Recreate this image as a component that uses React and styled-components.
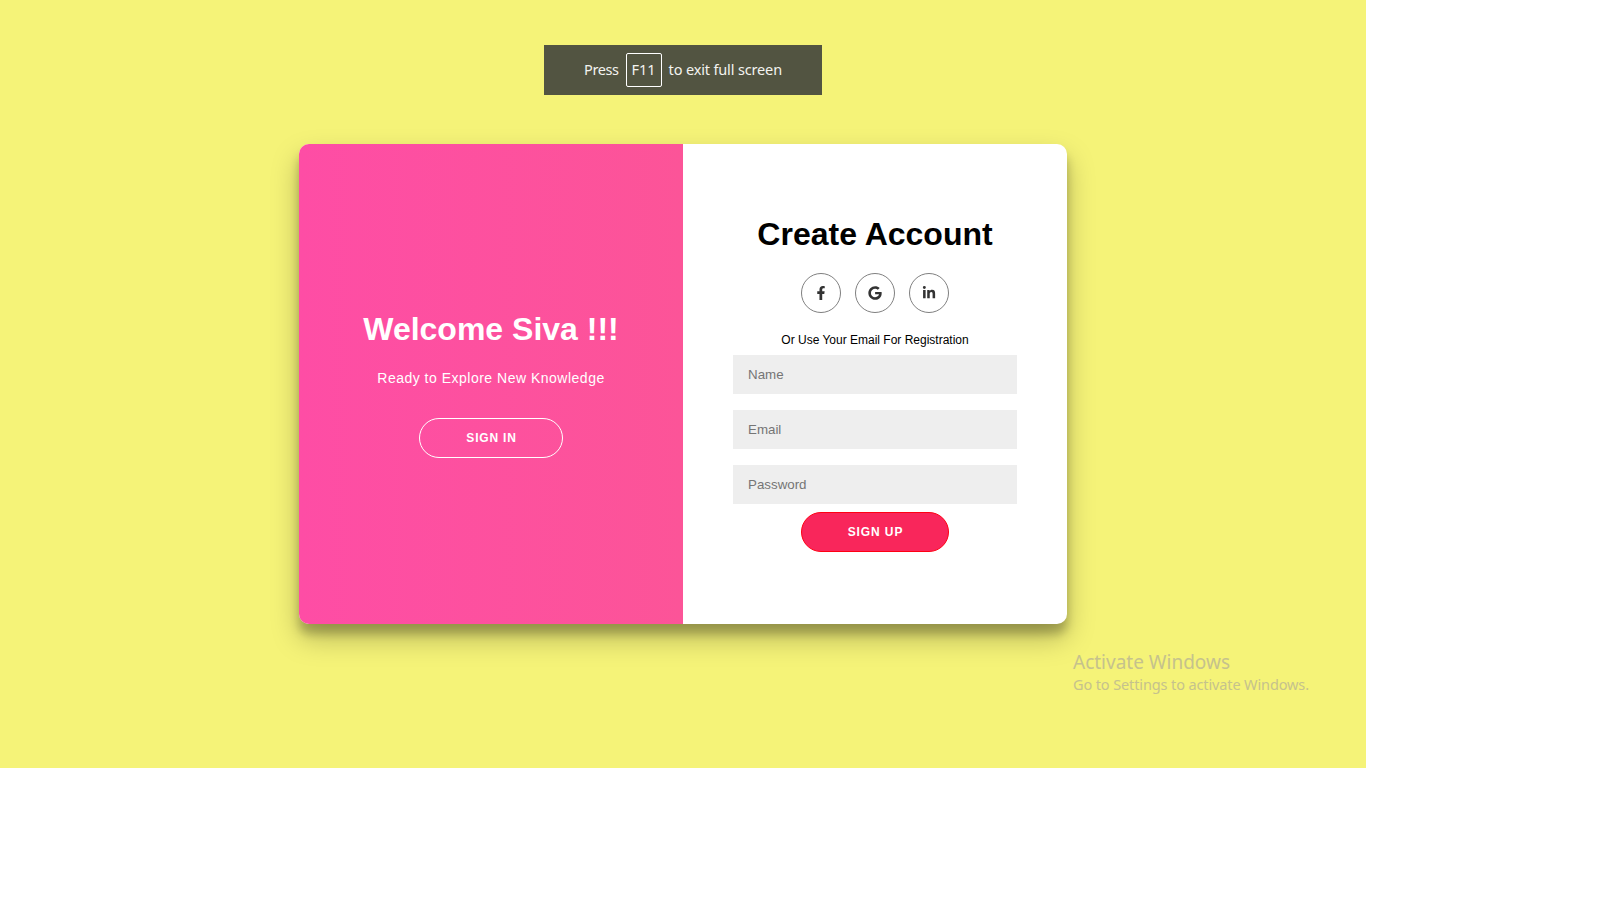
import React from "react";
import styled, { createGlobalStyle } from "styled-components";
import { FaFacebookF, FaGoogle, FaLinkedinIn } from "react-icons/fa";

const GlobalStyle = createGlobalStyle`
  *, *::before, *::after { box-sizing: border-box; }
  body { margin: 0; background: #fff; font-family: "Liberation Sans", Arial, sans-serif; }
  h1, p { margin: 0; }
`;

const Screen = styled.main`
  position: relative;
  width: 1366px;
  height: 768px;
  display: flex;
  align-items: center;
  justify-content: center;
  background: #f5f378;
`;

const Card = styled.section`
  display: flex;
  width: 768px;
  height: 480px;
  border-radius: 10px;
  overflow: hidden;
  background: #fff;
  box-shadow: 0 14px 28px rgba(0, 0, 0, 0.25), 0 10px 10px rgba(0, 0, 0, 0.22);
`;

const Panel = styled.div`
  flex: none;
  width: 50%;
  display: flex;
  flex-direction: column;
  align-items: center;
  justify-content: center;
  text-align: center;
`;

const WelcomePanel = styled(Panel)`
  padding: 1px 40px 0;
  color: #fff;
  background: linear-gradient(to right, #fe4da5, #fc5498);
`;

const FormPanel = styled(Panel).attrs({ as: "form" })`
  padding: 0 50px;
  color: #000;
`;

const Title = styled.h1`
  font-size: 32px;
  line-height: 37px;
  font-weight: bold;
  white-space: nowrap;
`;

const Lead = styled.p`
  margin: 20px 0 30px;
  font-size: 14px;
  line-height: 20px;
  letter-spacing: 0.5px;
`;

const PillButton = styled.button`
  width: ${(p) => (p.$solid ? "148px" : "144px")};
  height: 40px;
  padding: 0;
  border: 1px solid ${(p) => (p.$solid ? "#ff0014" : "#fff")};
  border-radius: 20px;
  background: ${(p) => (p.$solid ? "#f9265b" : "transparent")};
  color: #fff;
  font: bold 12px/14px "Liberation Sans", Arial, sans-serif;
  letter-spacing: ${(p) => (p.$solid ? "0.9px" : "0.8px")};
  text-indent: 1px;
  text-transform: uppercase;
  white-space: nowrap;
`;

const Socials = styled.div`
  display: flex;
  gap: 14px;
  margin: 20px 0;
`;

const SocialLink = styled.a`
  display: flex;
  align-items: center;
  justify-content: center;
  width: 40px;
  height: 40px;
  border: 1px solid #808080;
  border-radius: 50%;
  color: #333;
  font-size: 14px;
`;

const Hint = styled.span`
  font-size: 12px;
  line-height: 14px;
`;

const Field = styled.input`
  width: 100%;
  height: 39px;
  margin: 8px 0;
  padding: 0 15px;
  border: 0;
  background: #eee;
  font: 13.333px "Liberation Sans", Arial, sans-serif;
  &::placeholder { color: #757575; }
`;

const Toast = styled.div`
  position: absolute;
  top: 45px;
  left: 544px;
  width: 278px;
  height: 50px;
  display: flex;
  align-items: center;
  justify-content: center;
  gap: 7px;
  background: #525441;
  color: #f3f3ef;
  font: 14.5px/20px "Noto Sans", sans-serif;
  white-space: nowrap;
`;

const ToastText = styled.span`
  padding-bottom: 2px;
  letter-spacing: ${(p) => p.$spacing};
`;

const Key = styled.kbd`
  display: flex;
  align-items: center;
  justify-content: center;
  width: 36px;
  height: 34px;
  padding-bottom: 2px;
  border: 1px solid #fff;
  border-radius: 2px;
  font: inherit;
`;

const Watermark = styled.aside`
  position: absolute;
  top: 649px;
  left: 1073px;
  color: #c5c28d;
  font-family: "Noto Sans", sans-serif;
  white-space: nowrap;
`;

const WatermarkTitle = styled.p`
  font-size: 19px;
  line-height: 27px;
`;

const WatermarkNote = styled.p`
  margin-top: -1px;
  font-size: 14.5px;
  line-height: 18px;
  letter-spacing: -0.12px;
`;

export default function App() {
  return (
    <>
      <GlobalStyle />
      <Screen>
        <Card>
          <WelcomePanel>
            <Title>Welcome Siva !!!</Title>
            <Lead>Ready to Explore New Knowledge</Lead>
            <PillButton type="button">Sign In</PillButton>
          </WelcomePanel>
          <FormPanel>
            <Title>Create Account</Title>
            <Socials>
              <SocialLink aria-label="Facebook"><FaFacebookF /></SocialLink>
              <SocialLink aria-label="Google"><FaGoogle /></SocialLink>
              <SocialLink aria-label="LinkedIn"><FaLinkedinIn /></SocialLink>
            </Socials>
            <Hint>Or Use Your Email For Registration</Hint>
            <Field type="text" placeholder="Name" />
            <Field type="email" placeholder="Email" />
            <Field type="password" placeholder="Password" />
            <PillButton type="button" $solid>Sign Up</PillButton>
          </FormPanel>
        </Card>
        <Toast>
          <ToastText $spacing="-0.4px">Press</ToastText>
          <Key>F11</Key>
          <ToastText $spacing="-0.15px">to exit full screen</ToastText>
        </Toast>
        <Watermark>
          <WatermarkTitle>Activate Windows</WatermarkTitle>
          <WatermarkNote>Go to Settings to activate Windows.</WatermarkNote>
        </Watermark>
      </Screen>
    </>
  );
}
